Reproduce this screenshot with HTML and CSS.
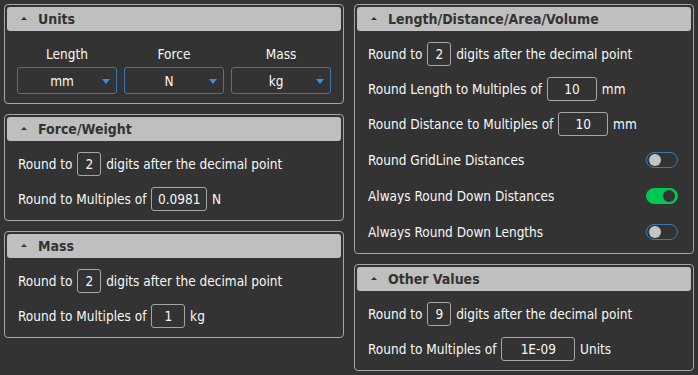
FILE: index.html
```html
<!DOCTYPE html>
<html>
<head>
<meta charset="utf-8">
<link rel="stylesheet" href="styles.css">
</head>
<body>
<div class="layout">
  <div class="col">
    <section class="panel">
      <div class="hdr"><span class="caret"></span>Units</div>
      <div class="units">
        <div class="unit"><div class="ulabel">Length</div><div class="select">mm<span class="arrow"></span></div></div>
        <div class="unit"><div class="ulabel">Force</div><div class="select">N<span class="arrow"></span></div></div>
        <div class="unit"><div class="ulabel">Mass</div><div class="select">kg<span class="arrow"></span></div></div>
      </div>
    </section>
    <section class="panel">
      <div class="hdr"><span class="caret"></span>Force/Weight</div>
      <div class="body">
        <div class="row">Round to <span class="box w24">2</span> digits after the decimal point</div>
        <div class="row">Round to Multiples of <span class="box w56">0.0981</span> N</div>
      </div>
    </section>
    <section class="panel">
      <div class="hdr"><span class="caret"></span>Mass</div>
      <div class="body">
        <div class="row">Round to <span class="box w24">2</span> digits after the decimal point</div>
        <div class="row">Round to Multiples of <span class="box w34">1</span> kg</div>
      </div>
    </section>
  </div>
  <div class="col">
    <section class="panel">
      <div class="hdr"><span class="caret"></span>Length/Distance/Area/Volume</div>
      <div class="body">
        <div class="row">Round to <span class="box w24">2</span> digits after the decimal point</div>
        <div class="row">Round Length to Multiples of <span class="box w50">10</span> mm</div>
        <div class="row">Round Distance to Multiples of <span class="box w50">10</span> mm</div>
        <div class="row trow">Round GridLine Distances <span class="toggle"><span class="knob"></span></span></div>
        <div class="row trow">Always Round Down Distances <span class="toggle on"><span class="knob"></span></span></div>
        <div class="row trow">Always Round Down Lengths <span class="toggle"><span class="knob"></span></span></div>
      </div>
    </section>
    <section class="panel">
      <div class="hdr"><span class="caret"></span>Other Values</div>
      <div class="body">
        <div class="row">Round to <span class="box w24">9</span> digits after the decimal point</div>
        <div class="row">Round to Multiples of <span class="box w74">1E-09</span> Units</div>
      </div>
    </section>
  </div>
</div>
</body>
</html>
```
FILE: styles.css
```css
html, body {
  margin: 0;
  padding: 0;
  background: #333333;
}
body {
  font-family: "DejaVu Sans Condensed", "DejaVu Sans", sans-serif;
  font-size: 13.5px;
  color: #f7f7f7;
}
.layout {
  display: grid;
  grid-template-columns: 340px 340px;
  column-gap: 10px;
  padding: 4px;
  align-items: start;
}
.col {
  display: flex;
  flex-direction: column;
  gap: 10px;
}
.panel {
  border: 1px solid #a6a6a6;
  border-radius: 4px;
  padding: 2px;
}
.hdr {
  height: 24px;
  background: #bfbfbf;
  border-radius: 3px;
  color: #333;
  font-weight: bold;
  font-size: 14px;
  display: flex;
  align-items: center;
  padding-left: 14px;
}
.caret {
  width: 0;
  height: 0;
  border-left: 3px solid transparent;
  border-right: 3px solid transparent;
  border-bottom: 3px solid #333;
  margin-right: 11px;
  margin-top: -1px;
}
.units {
  display: grid;
  grid-template-columns: 100px 100px 100px;
  column-gap: 7px;
  padding: 15px 10px 7px;
}
.unit {
  display: flex;
  flex-direction: column;
  align-items: center;
  gap: 5px;
}
.ulabel {
  line-height: 16px;
}
.select {
  box-sizing: border-box;
  width: 100px;
  height: 27px;
  border: 1px solid #3a78b4;
  border-radius: 3px;
  display: flex;
  align-items: center;
  justify-content: center;
  padding-right: 10px;
  position: relative;
}
.arrow {
  position: absolute;
  right: 6px;
  top: 11px;
  width: 0;
  height: 0;
  border-left: 4px solid transparent;
  border-right: 4px solid transparent;
  border-top: 5px solid #3f8fd8;
}
.body {
  display: flex;
  flex-direction: column;
  gap: 11px;
  padding: 11px 12px 7px 11px;
}
.row {
  height: 24px;
  display: flex;
  align-items: center;
  white-space: pre;
}
.trow {
  height: 25px;
  justify-content: space-between;
}
.box {
  box-sizing: border-box;
  height: 24px;
  border: 1px solid #a6a6a6;
  border-radius: 3px;
  display: inline-flex;
  align-items: center;
  justify-content: center;
  margin: 0 1px;
}
.w24 { width: 24px; }
.w34 { width: 34px; }
.w50 { width: 50px; }
.w56 { width: 56px; }
.w74 { width: 74px; }
.toggle {
  box-sizing: border-box;
  width: 32px;
  height: 16px;
  border: 1px solid #3a78b4;
  border-radius: 8px;
  display: flex;
  align-items: center;
  padding: 0 2px;
  margin-right: 1px;
}
.knob {
  width: 12px;
  height: 12px;
  border-radius: 50%;
  background: #c4c4c4;
}
.toggle.on {
  background: #00c853;
  border-color: #00c853;
  justify-content: flex-end;
}
.toggle.on .knob {
  background: #333333;
}
```
